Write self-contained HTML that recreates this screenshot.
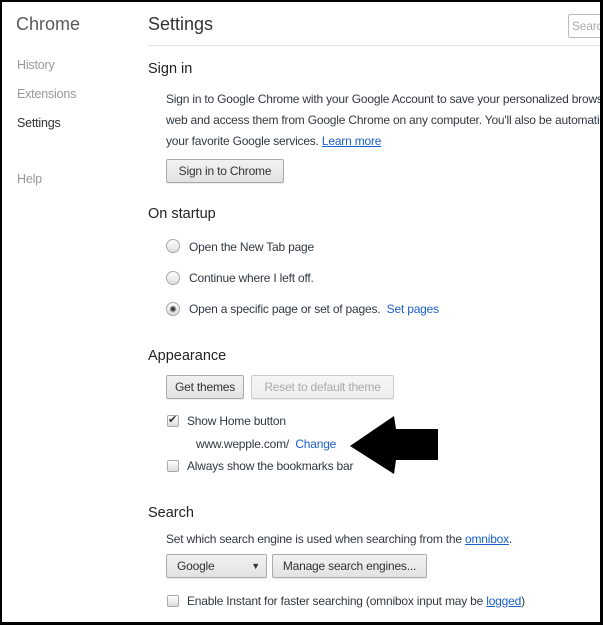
<!DOCTYPE html>
<html><head><meta charset="utf-8"><style>
*{margin:0;padding:0;box-sizing:border-box}
html{overflow:hidden;width:603px;height:625px}
body{width:603px;height:625px;overflow:hidden;background:#fff;font-family:"Liberation Sans",sans-serif;font-size:12px;letter-spacing:-0.2px;color:#303942;position:relative}
.frame{position:absolute;left:0;top:0;width:603px;height:625px;border:2px solid #000;border-right-width:3px;border-bottom-width:3px;pointer-events:none;z-index:10}
.t{position:absolute;line-height:14px;white-space:nowrap}
.nav{color:#999;font-size:12.5px}
h{position:absolute;font-size:14.5px;line-height:18px;color:#222;white-space:nowrap;letter-spacing:0}
.btn{position:absolute;border:1px solid #aaa;border-radius:2px;background:linear-gradient(#f2f2f2,#e2e2e2);text-align:center;line-height:23px;color:#333;white-space:nowrap;box-shadow:0 1px 0 rgba(0,0,0,.08)}
.dis{color:#aaa;border-color:#ccc;background:linear-gradient(#f6f6f6,#eee)}
.a{color:#1b5fcc}
.u{text-decoration:underline}
.radio{position:absolute;width:14px;height:14px;border:1px solid #aaa;border-radius:50%;background:linear-gradient(#fff,#ddd)}
.cb{position:absolute;width:12px;height:12px;border:1px solid #aaa;border-radius:2px;background:linear-gradient(#fff,#ddd)}
</style></head><body>
<div class="frame"></div>
<div class="t" style="left:16px;top:13px;font-size:18px;line-height:22px;color:#5a5a5a;letter-spacing:0">Chrome</div>
<div class="t" style="left:148px;top:13px;font-size:18px;line-height:22px;color:#333;letter-spacing:0">Settings</div>
<div style="position:absolute;left:568px;top:14px;width:40px;height:24px;border:1px solid #bbb;border-radius:2px"></div>
<div class="t" style="left:572px;top:19px;color:#aaa">Search</div>
<div style="position:absolute;left:148px;top:45px;width:455px;height:1px;background:#e2e2e2"></div>
<div class="t nav" style="left:17px;top:58px">History</div>
<div class="t nav" style="left:17px;top:87px">Extensions</div>
<div class="t nav" style="left:17px;top:116px;color:#333">Settings</div>
<div class="t nav" style="left:17px;top:172px">Help</div>

<h style="left:148px;top:60px">Sign in</h>
<div class="t" style="left:166px;top:92px">Sign in to Google Chrome with your Google Account to save your personalized browsing</div>
<div class="t" style="left:166px;top:113px">web and access them from Google Chrome on any computer. You'll also be automatically</div>
<div class="t" style="left:166px;top:134px">your favorite Google services. <span class="a u">Learn more</span></div>
<div class="btn" style="left:166px;top:159px;width:118px;height:24px">Sign in to Chrome</div>

<h style="left:148px;top:205px">On startup</h>
<div class="radio" style="left:166px;top:239px"></div>
<div class="t" style="left:189px;top:240px">Open the New Tab page</div>
<div class="radio" style="left:166px;top:271px"></div>
<div class="t" style="left:189px;top:271px">Continue where I left off.</div>
<div class="radio" style="left:166px;top:302px"><div style="position:absolute;left:4px;top:4px;width:4px;height:4px;border-radius:50%;background:#444;box-shadow:0 0 1px 1px #777"></div></div>
<div class="t" style="left:189px;top:302px">Open a specific page or set of pages. &nbsp;<span class="a">Set pages</span></div>

<h style="left:148px;top:347px">Appearance</h>
<div class="btn" style="left:166px;top:375px;width:78px;height:24px">Get themes</div>
<div class="btn dis" style="left:251px;top:375px;width:143px;height:24px">Reset to default theme</div>
<div class="cb" style="left:167px;top:415px"><span style="position:absolute;left:0px;top:-3px;font-size:11px;color:#333">✔</span></div>
<div class="t" style="left:187px;top:414px">Show Home button</div>
<div class="t" style="left:196px;top:437px">www.wepple.com/ &nbsp;<span class="a">Change</span></div>
<div class="cb" style="left:167px;top:460px"></div>
<div class="t" style="left:187px;top:459px">Always show the bookmarks bar</div>
<svg style="position:absolute;left:0;top:0" width="603" height="625"><polygon points="350,446 394,416 396,429 438,429 438,460 396,460 394,474" fill="#000"/></svg>

<h style="left:148px;top:504px">Search</h>
<div class="t" style="left:166px;top:532px">Set which search engine is used when searching from the <span class="a u">omnibox</span>.</div>
<div class="btn" style="left:166px;top:554px;width:101px;height:24px;text-align:left;padding-left:10px">Google<span style="position:absolute;right:6px;top:0;font-size:9px">▼</span></div>
<div class="btn" style="left:272px;top:554px;width:155px;height:24px">Manage search engines...</div>
<div class="cb" style="left:167px;top:595px"></div>
<div class="t" style="left:187px;top:594px">Enable Instant for faster searching (omnibox input may be <span class="a u">logged</span>)</div>
</body></html>
